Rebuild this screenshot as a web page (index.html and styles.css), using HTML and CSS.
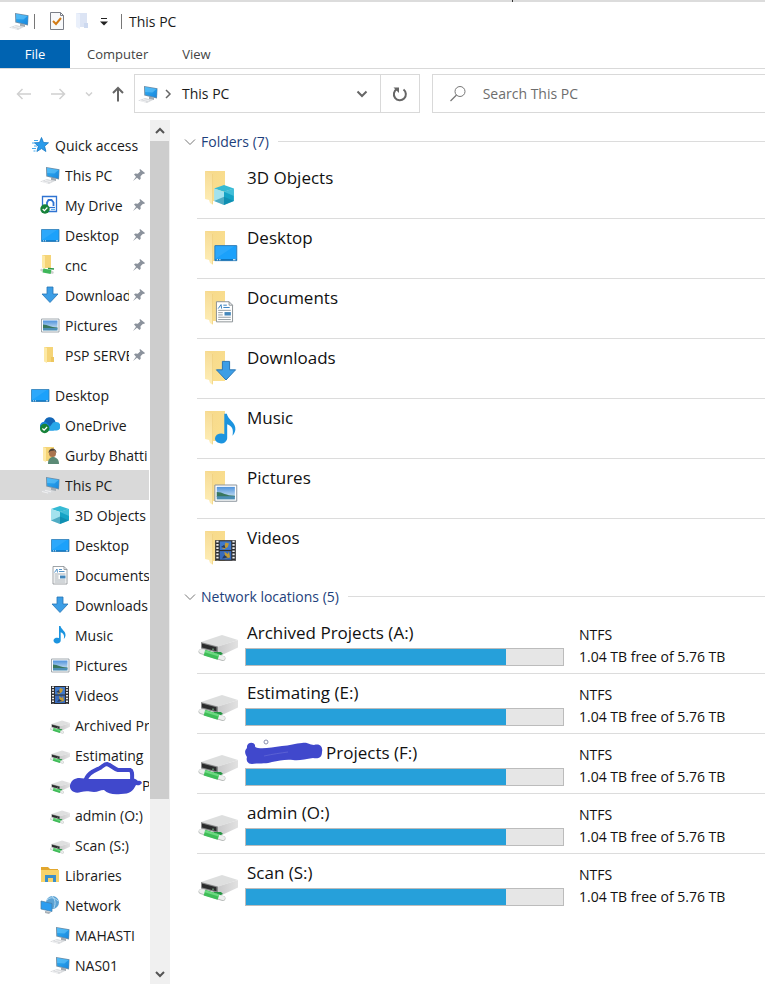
FILE: index.html
```html
<!DOCTYPE html>
<html lang="en">
<head>
  <meta charset="UTF-8" />
  <meta name="viewport" content="width=device-width, initial-scale=1.0" />
  <title>This PC</title>
  <link rel="stylesheet" href="styles.css">
</head>
<body>
  <svg class="sprite" aria-hidden="true">
    <defs>
      <linearGradient id="screen" x1="0" y1="0" x2="1" y2="1">
        <stop offset="0" stop-color="#2fb0f5" /><stop offset="1" stop-color="#1a86dc" />
      </linearGradient>
      <linearGradient id="paper" x1="0" y1="0" x2="1" y2="1">
        <stop offset="0" stop-color="#f6d98c" /><stop offset="1" stop-color="#fbe08f" />
      </linearGradient>
      <linearGradient id="flap" x1="0" y1="0" x2="0" y2="1">
        <stop offset="0" stop-color="#f7dc95" /><stop offset="1" stop-color="#feeeb8" />
      </linearGradient>
      <linearGradient id="sky" x1="0" y1="0" x2="0" y2="1">
        <stop offset="0" stop-color="#4f93dc" /><stop offset="1" stop-color="#e3f1f7" />
      </linearGradient>
      <linearGradient id="metal" x1="0" y1="0" x2="1" y2="0">
        <stop offset="0" stop-color="#c9c9ca" /><stop offset="1" stop-color="#e2e2e2" />
      </linearGradient>
    </defs>
    <symbol id="pc" viewBox="0 0 20 20">
      <path d="M0 16.500l7-2.500 8 2-6 3z" fill="#d9dbde" /><path d="M2 16.500l6 1.500M5 15.300l6 1.500" stroke="#fff" stroke-width=".6" />
      <path d="M11 12.500l5 1.300v2.200l-5-1z" fill="#a4abb2" />
      <path d="M6 2l13.500 2.300L19 14.500 6.300 11.500z" fill="#6f8fa8" />
      <path d="M7 3l12 2-.5 8.500L7.300 10.700z" fill="url(#screen)" /><path d="M7 3l11.500 2-4 3.500-7.300-.5z" fill="#65c5fa" opacity=".6" />
    </symbol>
    <symbol id="star" viewBox="0 0 20 20">
      <path d="M11.500 2.500l2 5 5 .3-3.900 3.400 1.300 5.300-4.400-2.900-4.600 2.900 1.400-5.300L4.500 7.800l5-.3z" fill="#2a9bea" stroke="#1477c4" stroke-width=".8" />
      <path d="M4 5.500h4M2 8h3M4 11h3M2 13.500h4M3.500 16h2" stroke="#42a9ee" />
    </symbol>
    <symbol id="drive" viewBox="0 0 20 20">
      <path d="M2.500 1.500h14v15h-14z" fill="#fff" stroke="#2f73d2" stroke-width="1.300" />
      <path d="M7 11V7.500l1.500-2.500h3L13.500 7.500V11" fill="none" stroke="#2f73d2" stroke-width="1.800" />
      <path d="M7 12.500h8" stroke="#2f73d2" stroke-width="1.200" /><path d="M11 14.500h4" stroke="#62b1ee" stroke-width="1.200" />
      <circle cx="5" cy="14" r="4.700" fill="#178239" /><path d="M2.700 14l1.700 1.700 3-3.200" fill="none" stroke="#fff" stroke-width="1.200" />
    </symbol>
    <symbol id="desktop" viewBox="0 0 20 20">
      <path d="M1.500 4.500h17.500v12H1.500z" fill="#1ba1fb" stroke="#2f7db8" stroke-width=".8" />
      <path d="M2 5h15L2 15z" fill="#3db0fb" opacity=".5" />
      <path d="M2 15.800h17" stroke="#0d68ab" stroke-width=".8" /><path d="M3 15.800h1M5 15.800h1M16 15.800h2" stroke="#fff" stroke-width=".8" />
    </symbol>
    <symbol id="netfolder" viewBox="0 0 20 20">
      <path d="M2 0h9v13H5z" fill="#f5d477" /><path d="M2 0l3 1v13l-3-1.500z" fill="#fde9a5" />
      <path d="M1.500 15l11 2.500" stroke="#ccd0cd" stroke-width="2.500" stroke-linecap="round" /><path d="M3 15.500l8 1.500" stroke="#3fb75a" stroke-width="4" /><path d="M8 13.500l6 .5" stroke="#2c9747" stroke-width="1.500" />
    </symbol>
    <symbol id="folder" viewBox="0 0 20 20">
      <path d="M4 2h9v15H7z" fill="#f5d477" /><path d="M4 2l3 1v15l-3-1.500z" fill="#fde9a5" /><path d="M11 12h3v5h-3z" fill="#edc65e" />
    </symbol>
    <symbol id="download" viewBox="0 0 20 20">
      <path d="M7 2h6v7h5l-8 8.500L2 9h5z" fill="#3c9ee6" stroke="#2674b4" stroke-width=".8" />
    </symbol>
    <symbol id="picture" viewBox="0 0 20 20">
      <path d="M1.500 4h17.500v13h-17.500z" fill="#fff" stroke="#8b949c" stroke-width=".8" />
      <path d="M3 5.500h14.500v10H3z" fill="url(#sky)" /><path d="M3 9.500c5 0 7 3 14.500 3v1H3z" fill="#39775e" /><path d="M3 13h14.500v2.500H3z" fill="#4b8eb4" />
    </symbol>
    <symbol id="onedrive" viewBox="0 0 20 20">
      <path d="M4 9a5.500 5.500 0 0 1 11.500-2L9 14z" fill="#1266b7" /><path d="M0 12a4.500 4.500 0 0 1 6-5l8 8.500H3A3 3 0 0 1 0 12z" fill="#1785d8" />
      <path d="M7 15.500l6-8a5 5 0 0 1 3-.5 4.300 4.300 0 0 1 1 8.500z" fill="#29a8ea" />
      <circle cx="4.700" cy="13.500" r="4.700" fill="#178239" /><path d="M2.400 13.500l1.700 1.700 3-3.200" fill="none" stroke="#fff" stroke-width="1.200" />
    </symbol>
    <symbol id="user" viewBox="0 0 20 20">
      <path d="M3 2h11v14H6z" fill="#f5d477" /><path d="M3 2l3 1v14l-3-1.500z" fill="#fde9a5" />
      <path d="M8 19c0-5 2-7 5-7s6 2 6 7z" fill="#5b8a76" /><circle cx="12.500" cy="8.500" r="3.500" fill="#a9744f" /><path d="M8.500 8c0-6 8-6 8 0l-2-2.500-4 .5z" fill="#4d4037" />
    </symbol>
    <symbol id="cube" viewBox="0 0 20 20">
      <path d="M1 4l9-3 9 3-9 3z" fill="#35bad4" /><path d="M1 4l9 3v12l-9-3.500z" fill="#a3e2ee" /><path d="M19 4l-9 3v12l9-3.500z" fill="#14a3c5" />
      <path d="M1 15.500l9-4 9 4-9 3.500z" fill="#0b7fa3" opacity=".55" /><path d="M10 7l9-3v7z" fill="#5fd0e5" opacity=".6" />
    </symbol>
    <symbol id="document" viewBox="0 0 20 20">
      <path d="M3 1.500h11l3 3V19H3z" fill="#fff" stroke="#858b90" stroke-width=".8" /><path d="M14 1.500v3h3" fill="none" stroke="#858b90" stroke-width=".8" />
      <path d="M4.500 7.500L7 4l.5 3.500M9 4.500h3M9 6.500h5.500" fill="none" stroke="#2878ba" stroke-width=".8" />
      <path d="M4.500 9h11M4.500 11h4M4.500 13h4M4.500 15h11M4.500 17h11" stroke="#8d979e" stroke-width=".8" /><path d="M10 10.500h5.500v3H10z" fill="#4386ba" />
    </symbol>
    <symbol id="music" viewBox="0 0 20 20">
      <path d="M9 1h1.500c.5 3.500 5.500 5 5 9.500-.2 1.500-.8 2.500-1.700 3.500.8-4-.2-5.500-3.100-6.800V15.500a3.600 2.900 0 1 1-1.700-2.400z" fill="#1c94df" />
    </symbol>
    <symbol id="video" viewBox="0 0 20 20">
      <path d="M1 1h18v18H1z" fill="#2d2e31" /><path d="M5 2h10v7.500H5z" fill="#3f79cb" /><path d="M5 10.500h10V18H5z" fill="#386bbc" />
      <path d="M10 3l3 1-1 3-3 2-2-1 2-2zM9 11l3 2 1-2 1 5-4 1z" fill="#c19b36" /><path d="M6 7l3-2 1 3zM7 17l2-3 3 2z" fill="#263c63" />
      <path d="M3 1.500v17M17 1.500v17" stroke="#eee" stroke-width="2" stroke-dasharray="1.500 1.300" />
    </symbol>
    <symbol id="disk" viewBox="0 0 40 30">
      <path d="M3 9l21-7 16 5-20 6.500z" fill="#dedfdf" /><path d="M20 13.500L40 7v7.500L25 21.500l-5-1z" fill="url(#metal)" />
      <path d="M3 9l17 4.500v6.500L3 15.500z" fill="#8a8b8c" /><path d="M4 10.500l14.500 3.800v4L4 14.500z" fill="#2b2c2d" /><path d="M15 15.500v1.500" stroke="#8fd4a0" />
      <path d="M16 19h7l2 2-4 2h-8z" fill="#259543" />
      <path d="M3 18.500l22 7" stroke="#b9bdbb" stroke-width="5" stroke-linecap="round" /><path d="M3 18.200l22 7" stroke="#eceeed" stroke-width="4" stroke-linecap="round" />
      <path d="M6.500 19.700l14 4.300" stroke="#3fbd58" stroke-width="6" /><path d="M7 18.300l14 4.200" stroke="#6cd981" stroke-width="2" />
    </symbol>
    <symbol id="library" viewBox="0 0 20 20">
      <path d="M1 2h7l2 2h8v13H1z" fill="#e2a72e" /><path d="M1 5h18v12H1z" fill="#f8d369" /><path d="M5 10h11v7h-3v-4H8v4H5z" fill="#3a8fca" />
    </symbol>
    <symbol id="network" viewBox="0 0 20 20">
      <circle cx="12.500" cy="7.500" r="6.500" fill="#5ba2d4" /><path d="M7 5c4-4 8-2 11 1M12 1c3 3 4 7 2 12" fill="none" stroke="#b5dbf2" />
      <path d="M5 16l6 1-2 2-4-1z" fill="#aab1b7" /><path d="M1 6l11 2.500v8L1 14z" fill="#2b9df0" stroke="#477ba2" stroke-width=".7" />
    </symbol>
    <symbol id="pin" viewBox="0 0 14 14">
      <path d="M8 1l5 4-1 1-1-.3-2.500 2.500.2 2.500L7.500 12 5 9.700 1 13l3-4.300L2 6.500 3.300 5.500l2.500.3L8.300 3.300 7.500 2z" fill="#8b929c" />
    </symbol>
    <symbol id="chevron" viewBox="0 0 12 12">
      <path d="M1 3.500l5 5 5-5" fill="none" stroke="currentColor" />
    </symbol>
  </svg>

  <div class="edge"></div>

  <header class="titlebar">
    <svg class="icon"><use href="#pc" /></svg>
    <span class="divider"></span>
    <div class="quick-tools">
      <button aria-label="Properties">
        <svg width="16" height="20"><path d="M1.500 1.500h10l3 3v14h-13z" fill="#f8f9fb" stroke="#7b7f88" /><path d="M11.500 1.500v3h3" fill="none" stroke="#7b7f88" /><path d="M4 10l3 3 5-6" fill="none" stroke="#d27b16" stroke-width="2" /></svg>
      </button>
      <button aria-label="New folder">
        <svg width="14" height="20"><path d="M1 2h11v14H5z" fill="#dce4f4" /><path d="M1 2l4 1v15l-4-2z" fill="#eaf0fb" /><path d="M9 12h4v5H9z" fill="#cdd9ef" /></svg>
      </button>
      <button aria-label="Customize toolbar">
        <svg width="10" height="10"><path d="M2 2.500h6" stroke="#222" /><path d="M1 5.500h8l-4 4z" fill="#222" /></svg>
      </button>
    </div>
    <span class="divider"></span>
    <h1>This PC</h1>
  </header>

  <nav class="tabs">
    <button class="file">File</button>
    <button>Computer</button>
    <button>View</button>
  </nav>

  <div class="toolbar">
    <div class="history">
      <button class="off" aria-label="Back"><svg width="16" height="12"><path d="M15 6H1.500M6.500 1l-5 5 5 5" fill="none" stroke="currentColor" stroke-width="1.500" /></svg></button>
      <button class="off" aria-label="Forward"><svg width="16" height="12"><path d="M1 6h13.500M9.500 1l5 5-5 5" fill="none" stroke="currentColor" stroke-width="1.500" /></svg></button>
      <button class="off" aria-label="Recent locations"><svg width="8" height="8"><path d="M1 2.500l3 3 3-3" fill="none" stroke="currentColor" stroke-width="1.500" /></svg></button>
      <button aria-label="Up"><svg width="14" height="16"><path d="M7 15.500V2M2 7l5-5 5 5" fill="none" stroke="currentColor" stroke-width="2" /></svg></button>
    </div>
    <div class="address">
      <svg class="icon"><use href="#pc" /></svg>
      <svg width="8" height="10"><path d="M2 1l4 4-4 4" fill="none" stroke="#666" stroke-width="1.500" /></svg>
      <span class="path">This PC</span>
      <button class="drop" aria-label="Previous locations"><svg width="12" height="10"><path d="M1.500 2.500l4.500 4.500 4.500-4.500" fill="none" stroke="currentColor" stroke-width="2" /></svg></button>
      <button class="refresh" aria-label="Refresh"><svg width="16" height="16"><path d="M11.500 3.500a6 6 0 1 1-6.500-.5" fill="none" stroke="currentColor" stroke-width="2" /><path d="M1.500 1.500H7V7z" fill="currentColor" /></svg></button>
    </div>
    <label class="search">
      <svg width="18" height="18"><circle cx="11" cy="6.500" r="5" fill="none" stroke="#777" /><path d="M7.500 10L1.500 16" stroke="#777" stroke-width="1.200" /></svg>
      <input type="text" placeholder="Search This PC" aria-label="Search This PC" />
    </label>
  </div>

  <div class="window">
    <nav class="tree" id="tree"></nav>
    <div class="scrollbar">
      <button aria-label="Scroll up"><svg class="up" width="12" height="12"><path d="M2 4l4 4 4-4" fill="none" stroke="currentColor" stroke-width="2" /></svg></button>
      <div class="track"><div class="thumb"></div></div>
      <button aria-label="Scroll down"><svg width="12" height="12"><path d="M2 4l4 4 4-4" fill="none" stroke="currentColor" stroke-width="2" /></svg></button>
    </div>
    <main>
      <section>
        <h2><button><svg width="12" height="12"><use href="#chevron" /></svg>Folders (7)</button></h2>
        <ul id="folders"></ul>
      </section>
      <section>
        <h2><button><svg width="12" height="12"><use href="#chevron" /></svg>Network locations (5)</button></h2>
        <ul id="drives"></ul>
      </section>
    </main>
  </div>

  <script>
    const treeGroups = [
      [
        { name: "Quick access", icon: "star", level: 0 },
        { name: "This PC", icon: "pc", level: 1, pinned: true },
        { name: "My Drive", icon: "drive", level: 1, pinned: true },
        { name: "Desktop", icon: "desktop", level: 1, pinned: true },
        { name: "cnc", icon: "netfolder", level: 1, pinned: true },
        { name: "Downloads", icon: "download", level: 1, pinned: true },
        { name: "Pictures", icon: "picture", level: 1, pinned: true },
        { name: "PSP SERVER", icon: "folder", level: 1, pinned: true }
      ],
      [
        { name: "Desktop", icon: "desktop", level: 0 },
        { name: "OneDrive", icon: "onedrive", level: 1 },
        { name: "Gurby Bhatti", icon: "user", level: 1 },
        { name: "This PC", icon: "pc", level: 1, selected: true },
        { name: "3D Objects", icon: "cube", level: 2 },
        { name: "Desktop", icon: "desktop", level: 2 },
        { name: "Documents", icon: "document", level: 2 },
        { name: "Downloads", icon: "download", level: 2 },
        { name: "Music", icon: "music", level: 2 },
        { name: "Pictures", icon: "picture", level: 2 },
        { name: "Videos", icon: "video", level: 2 },
        { name: "Archived Projects (A:)", icon: "disk", level: 2 },
        { name: "Estimating", icon: "disk", level: 2 },
        { name: "Projects (F:)", icon: "disk", level: 2, hidden: true },
        { name: "admin (O:)", icon: "disk", level: 2 },
        { name: "Scan (S:)", icon: "disk", level: 2 },
        { name: "Libraries", icon: "library", level: 1 },
        { name: "Network", icon: "network", level: 1 },
        { name: "MAHASTI", icon: "pc", level: 2 },
        { name: "NAS01", icon: "pc", level: 2 }
      ]
    ];

    // badge: x, y, size of the small icon over the folder
    const folders = [
      { name: "3D Objects", icon: "cube", badge: [9, 16, 22] },
      { name: "Desktop", icon: "desktop", badge: [9, 12, 25] },
      { name: "Documents", icon: "document", badge: [9, 12, 23] },
      { name: "Downloads", icon: "download", badge: [10, 11, 24] },
      { name: "Music", icon: "music", badge: [5, 4, 34] },
      { name: "Pictures", icon: "picture", badge: [9, 12, 25] },
      { name: "Videos", icon: "video", badge: [10, 11, 23] }
    ];

    const drives = [
      { name: "Archived Projects (A:)", used: 82 },
      { name: "Estimating (E:)", used: 82 },
      { name: "Projects (F:)", used: 82, hidden: true },
      { name: "admin (O:)", used: 82 },
      { name: "Scan (S:)", used: 82 }
    ];

    const treeScribble = `
      <svg class="tree-scribble" width="76" height="36" viewBox="0 0 76 36" aria-hidden="true">
        <path d="M16 22c2-9 9-11 15-14 3-2 4-4 7-4 4 1 7 5 11 6h12c3 1 2 6 2 12" fill="none" stroke="#4048cc" stroke-width="4" stroke-linejoin="round" stroke-linecap="round" />
        <path d="M4 20c6-4 9-1 18-1h40c3-1 5 0 7 2 3-1 5 2 3 3-2 2-3 1-5 1-3 6-6 9-15 9-7 1-13 0-17-4-4 0-6 2-10 2-6-1-9-1-13 0-9 3-15-5-8-12z" fill="#4048cc" />
      </svg>`;

    const nameScribble = `
      <svg class="name-scribble" width="78" height="26" viewBox="0 0 78 26" aria-hidden="true">
        <path d="M2 9c-1-5 6-7 8-3 0 2 0 2 3 3 7 1 15-1 24-2 7 0 14-3 20-3 6-1 7 2 12 2 7-2 9 3 8 7 0 6-4 7-9 6-8 1-14 3-20 2-8-1-14 1-21 2-5 2-13 1-20 2-5 0-6-4-5-7-2-3-3-6 0-9z" fill="#4048cc" />
        <path d="M19 17c9-2 17-3 24-4" stroke="#6b71d8" stroke-width=".6" fill="none" />
        <circle cx="21" cy="3" r="2" fill="#fff" stroke="#8a8fae" />
      </svg>`;

    const tree = document.getElementById("tree");
    treeGroups.forEach(group => {
      const list = document.createElement("ul");
      list.innerHTML = group.map(item => `
        <li>
          <a href="#" class="level-${item.level}${item.selected ? " selected" : ""}${item.hidden ? " redacted" : ""}">
            <svg class="icon ${item.icon}"><use href="#${item.icon}" /></svg>
            <span>${item.name}</span>
            ${item.pinned ? '<svg class="pin"><use href="#pin" /></svg>' : ""}
            ${item.hidden ? treeScribble : ""}
          </a>
        </li>`).join("");
      tree.appendChild(list);
    });

    document.getElementById("folders").innerHTML = folders.map(f => `
      <li class="item">
        <svg class="folder-icon" viewBox="0 0 36 40">
          <path d="M1 3h20v30H8z" fill="url(#paper)" />
          <path d="M1 3l8 3v31l-3-2-1-3-4-1z" fill="url(#flap)" />
          <path d="M8.500 6v30" stroke="#eccb74" stroke-width=".6" />
          <use href="#${f.icon}" x="${f.badge[0]}" y="${f.badge[1]}" width="${f.badge[2]}" height="${f.badge[2]}" />
        </svg>
        <h3>${f.name}</h3>
      </li>`).join("");

    document.getElementById("drives").innerHTML = drives.map(d => `
      <li class="item drive">
        <svg class="drive-icon"><use href="#disk" /></svg>
        <div class="usage">
          <h3 class="${d.hidden ? "redacted" : ""}">${d.hidden ? nameScribble : ""}${d.name}</h3>
          <div class="bar"><div class="fill" style="width: ${d.used}%"></div></div>
        </div>
        <div class="details">
          <p>NTFS</p>
          <p>1.04 TB free of 5.76 TB</p>
        </div>
      </li>`).join("");
  </script>
</body>
</html>
```

FILE: styles.css
```css
* { box-sizing: border-box; }
body { margin: 0; background: #fff; color: #1a1a1a; font-family: "Open Sans", "Noto Sans", sans-serif; font-size: 14px; }
h1, h2, h3, p, ul { margin: 0; padding: 0; font-weight: normal; }
ul { list-style: none; }
svg { display: block; flex: none; }
button { display: flex; align-items: center; justify-content: center; padding: 0; border: none; background: none; color: inherit; font: inherit; cursor: pointer; }
a { color: inherit; text-decoration: none; }
.sprite { position: absolute; width: 0; height: 0; }
.icon { width: 20px; height: 20px; }
.edge { height: 2px; background: linear-gradient(#333, #333) 67% 0 / 1px 2px no-repeat #dcdcdc; }

.titlebar { display: flex; align-items: center; height: 38px; padding-left: 9px; }
.titlebar h1 { padding-left: 7px; font-size: 14px; }
.divider { width: 1px; height: 15px; margin-left: 5px; background: #777; }
.quick-tools { display: flex; align-items: center; gap: 10px; padding: 0 7px 0 14px; }

.tabs { display: flex; height: 29px; border-bottom: 1px solid #d9d9d9; font-size: 13px; color: #444; }
.tabs button { padding: 0 17px; }
.tabs .file { width: 70px; background: #0063b1; color: #fff; }

.toolbar { display: grid; grid-template-columns: 134px minmax(0, 6fr) 12px minmax(0, 7fr); height: 51px; padding-top: 5px; }
.history { display: flex; align-items: center; justify-content: space-between; height: 39px; padding: 0 9px 0 16px; color: #666; }
.history .off { color: #d0d0d0; }
.address { display: flex; align-items: center; height: 39px; padding-left: 3px; border: 1px solid #d9d9d9; color: #666; }
.address .path { flex: 1; padding-left: 10px; color: #1a1a1a; }
.address svg + svg { margin-left: 6px; }
.drop { width: 36px; height: 37px; }
.refresh { width: 39px; height: 37px; border-left: 1px solid #d9d9d9; }
.search { grid-column: 4; display: flex; align-items: center; height: 39px; padding-left: 16px; gap: 16px; border: 1px solid #d9d9d9; border-right: none; }
.search input { flex: 1; min-width: 0; padding: 0; border: none; outline: none; background: none; font: inherit; }
.search input::placeholder { color: #6d6d6d; opacity: 1; }

.window { display: flex; }
.tree { flex: none; width: 149px; padding: 10px 0 4px; }
.tree ul + ul { margin-top: 10px; }
.tree a { display: flex; align-items: center; height: 30px; }
.tree a:hover { background: #e5f3ff; }
.tree .level-0 { padding-left: 30px; }
.tree .level-1 { padding-left: 40px; }
.tree .level-2 { padding-left: 50px; }
.tree a.selected { background: #d9d9d9; }
.tree a.redacted { position: relative; }
.tree span { flex: 1; min-width: 0; margin-left: 5px; overflow: hidden; white-space: nowrap; }
.tree .redacted span { padding-left: 67px; }
.tree .disk { height: 22px; padding-top: 4px; }
.tree .pin { width: 14px; height: 14px; margin: 0 3px; }
.tree-scribble { position: absolute; left: 69px; top: -10px; }

.scrollbar { display: flex; flex-direction: column; flex: none; width: 20px; margin-left: 1px; background: #f0f0f0; color: #555; }
.scrollbar button { height: 21px; }
.scrollbar .up { transform: rotate(180deg); }
.track { flex: 1; padding-right: 1px; }
.thumb { height: 80%; background: #cdcdcd; }

main { flex: 1; min-width: 0; padding: 4px 0 0 14px; }
h2 { display: flex; align-items: center; gap: 9px; height: 35px; font-size: 14px; color: #1e3f7c; }
h2::after { content: ""; flex: 1; height: 1px; background: #dcdcdc; }
h2 button { gap: 5px; }
h2 svg { color: #777; }
main ul { margin-left: 13px; }
.item { display: flex; height: 60px; border-bottom: 1px solid #dcdcdc; }
.item:last-child { border-bottom-color: transparent; }
h3 { font-size: 17px; line-height: 24px; color: #111; white-space: nowrap; }
.item > h3 { padding: 7px 0 0 7px; }
.folder-icon { width: 36px; height: 40px; margin: 9px 0 0 7px; }
.drive-icon { width: 40px; height: 30px; margin: 19px 0 0 1px; }
.usage { flex: 0 1 319px; min-width: 0; margin-left: 7px; padding-top: 7px; }
.usage h3 { padding-left: 2px; }
.usage h3.redacted { position: relative; padding-left: 81px; }
.name-scribble { position: absolute; left: 0; top: -2px; }
.bar { height: 18px; margin-top: 3px; border: 1px solid #bcbcbc; background: #e6e6e6; }
.fill { height: 100%; background: #26a0da; }
.details { padding: 10px 0 0 15px; line-height: 22px; white-space: nowrap; color: #111; }
```
